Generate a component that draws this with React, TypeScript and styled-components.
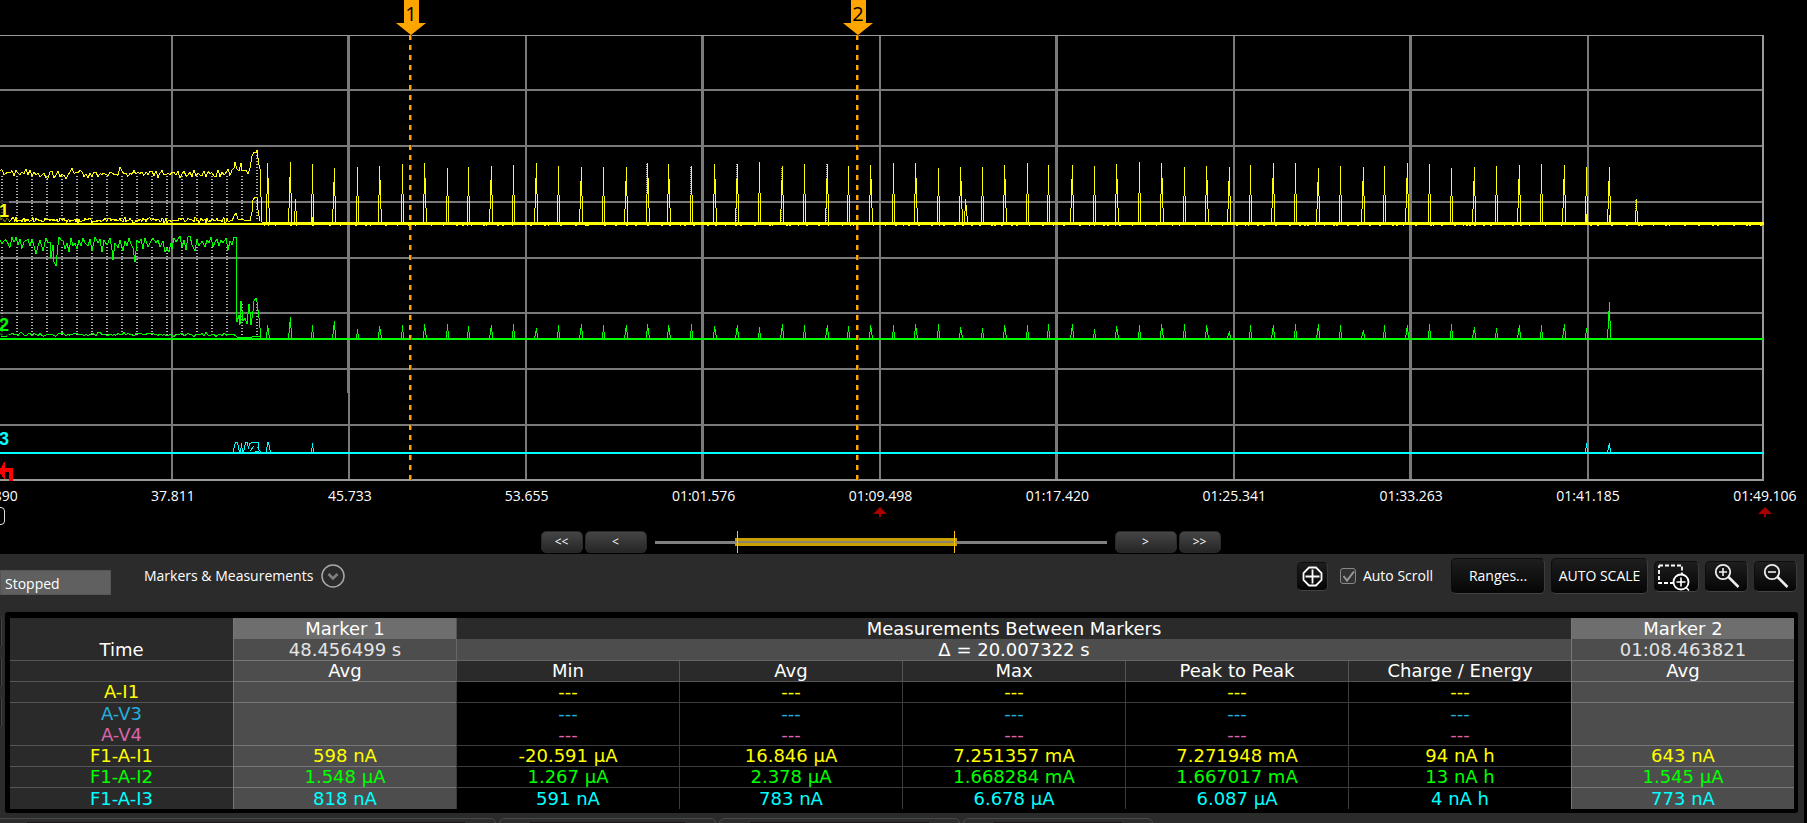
import React from "react";
import styled, { createGlobalStyle, css } from "styled-components";

const GlobalStyle = createGlobalStyle`
  * { box-sizing: border-box; }
  html, body { margin: 0; background: #000; }
  body {
    font-family: "Open Sans", "Noto Sans", sans-serif;
    font-size: 14px;
    line-height: 18px;
    color: #fff;
    overflow-x: hidden;
  }
  button, input { font: inherit; color: inherit; margin: 0; }
`;

/* ---------- waveform data ---------- */

const PLOT_W = 1764;
const PLOT_H = 482;
const YELLOW = "#ffff00";
const GREEN = "#00ff00";
const CYAN = "#00ffff";
const ORANGE = "#ffa500";

const GRID_ROWS = [89, 145, 201, 257, 312, 368, 424];
const GRID_COLS: [number, number][] = [
  [171, 2], [347, 3], [525, 2], [701, 3], [879, 2], [1055, 3], [1233, 2], [1409, 3], [1587, 2],
];

/* x, top of the current 1 pulse, skew, top of the current 2 pulse */
const PULSES: [number, number, number, number][] = [
  [267, 163, 1, 325], [290, 162, -1, 317], [312, 164, 0, 325], [334, 168, -1, 321],
  [357, 167, 0, 329], [379, 166, 1, 326], [402, 164, 0, 325], [424, 163, 1, 324],
  [447, 168, 0, 324], [468, 167, 0, 326], [491, 166, -1, 325], [513, 165, 0, 324],
  [536, 163, -1, 328], [558, 166, 0, 325], [581, 167, -1, 324], [603, 167, 0, 325],
  [626, 167, -1, 325], [647, 163, 1, 324], [668, 164, 1, 325], [691, 166, 0, 324],
  [714, 164, 1, 326], [737, 164, -1, 325], [759, 162, 0, 327], [782, 166, -1, 324],
  [804, 164, 0, 325], [827, 164, -1, 325], [848, 166, 0, 326], [870, 165, 1, 325],
  [893, 163, 0, 325], [915, 163, 1, 324], [938, 168, 0, 324], [960, 167, 1, 327],
  [982, 167, 0, 328], [1004, 165, 1, 325], [1027, 163, 0, 325], [1048, 165, 0, 324],
  [1072, 165, -1, 324], [1094, 166, 0, 329], [1116, 164, 1, 326], [1139, 162, 0, 325],
  [1161, 163, 1, 324], [1184, 167, 0, 324], [1206, 166, 1, 325], [1229, 167, -1, 331],
  [1250, 165, 0, 325], [1273, 163, -1, 325], [1295, 163, 0, 324], [1318, 168, -1, 324],
  [1340, 166, 0, 325], [1363, 167, -1, 330], [1384, 166, 0, 325], [1407, 163, -1, 325],
  [1429, 164, 0, 324], [1451, 168, 0, 324], [1474, 167, -1, 327], [1496, 166, 0, 328],
  [1519, 165, -1, 325], [1541, 164, 0, 325], [1564, 165, -1, 324], [1586, 167, 0, 328],
  [1609, 167, -1, 302],
];

function bar(x: number, from: number, to: number) {
  return `M${x} ${from}h1V${to}h-1z`;
}

function pulse(x: number, top: number, base: number, skew: number) {
  const h = base - top;
  const mid = Math.round(base - h * 0.48);
  if (skew === 0) return bar(x, top, mid) + bar(x - 1, mid, base) + bar(x + 1, mid, base);
  const shoulder = Math.round(top + h * 0.25);
  const foot = Math.round(base - h * 0.24);
  return (
    bar(x, top, mid) + bar(x + skew, shoulder, foot) + bar(x - skew, mid, base) + bar(x + 2 * skew, foot, base)
  );
}

function random(seed: number) {
  let s = seed;
  return () => {
    s = (s * 16807) % 2147483647;
    return s / 2147483647;
  };
}

function noise(seed: number, to: number, mid: number, swing: number, step: number) {
  const next = random(seed);
  const points: string[] = [];
  for (let x = 0; x <= to; x += step) {
    points.push(`${x} ${(mid + (next() + next() - 1) * swing).toFixed(1)}`);
  }
  return points.join("L");
}

function nibs() {
  const next = random(77);
  let d = "";
  for (let x = 264; x < 1760; x += 3 + Math.floor(next() * 14)) {
    d += `M${x} 225h${1 + Math.floor(next() * 3)}v1h-2z`;
  }
  return d;
}

const yellowUpper =
  "M" + noise(11, 230, 173.5, 6, 2) +
  "L232 170L234 168L235 162L237 169L239 171L241 163L242 171L246 170L248 174L250 168L252 156L254 152L256 153L257 150L259 165L260 169L261 197L262 222";
const yellowLower =
  "M" + noise(23, 232, 220, 3, 1) + "L234 216L236 213L238 219L250 221L252 212L253 200L255 197L257 198L258 210L260 221";
const greenUpper =
  "M" + noise(5, 34, 243, 9, 2) + "L36 254L38 246L" +
  "40 240L43 251L46 238L48 243L50 242L51 258L53 245L54 262L56 266L58 245L59 237L61 240L63 241L65 249L67 243L69 252L71 238L73 246L75 243L77 249L79 240L81 246L83 238L85 243L88 246L90 239L92 251L95 237L98 243L100 239L102 252L104 240L107 245L110 238L112 250L113 260L115 243L118 248L120 240L123 251L125 241L127 246L129 238L131 244L133 248L135 262L137 240L139 243L141 239L143 249L145 238L148 247L151 241L153 238L156 243L158 240L160 247L163 241L165 252L167 248L169 252L171 243L172 249L174 238L176 242L178 239L180 236L182 247L184 240L186 250L188 237L190 236L192 245L195 251L197 239L199 246L202 241L205 247L207 240L209 243L211 237L213 247L215 242L217 239L219 246L221 240L223 243L226 238L228 250L230 241L232 245L234 237L236 237V276L237 322L239 315L240 325L241 301L243 321L245 318L247 324L249 304L250 312L251 325L253 311L254 301L256 298L257 302L259 318L261 338";
const greenLower = "M" + noise(41, 234, 334.5, 2.4, 2) + "L237 337H252L256 336L260 337";
const cyanBurst =
  "M233.5 452V449.500L235.500 442.500H237.500L239.500 452M240.500 452L241.500 443.500L242.500 452M243.500 452L245.500 442.500H247.500L248.500 449L249.500 444L251.500 442.500H258.500V449L260.500 452M250.500 451L253.500 446M254.500 451H258.500M256.500 447.500H258.500M266.500 452L267.500 442.500H268.500L270.500 452";

const timesteps = Array.from({ length: 18 }, (_, i) => 2 + i * 15);

/* ---------- chart ---------- */

const Scope = styled.section`
  height: 554px;
  overflow: hidden;
  display: flex;
  flex-direction: column;
`;

const Plot = styled.div`
  position: relative;
  height: ${PLOT_H}px;
  margin-right: 43px;
`;

const Waves = styled.svg`
  display: block;
  width: 100%;
  height: 100%;
`;

const Flag = styled.div<{ $at: number }>`
  position: absolute;
  top: 0;
  left: ${(p) => (p.$at / PLOT_W) * 100}%;
  width: 30px;
  height: 35px;
  margin-left: -15px;
  background: ${ORANGE};
  clip-path: polygon(8px 0, 23px 0, 23px 23px, 30px 23px, 15px 35px, 0 23px, 8px 23px);
  color: #000;
  font-size: 20px;
  line-height: 28px;
  text-align: center;
`;

const ChannelTag = styled.span<{ $top: number; $color: string }>`
  position: absolute;
  top: ${(p) => p.$top}px;
  left: 0;
  width: 9px;
  height: 22px;
  background: rgba(0, 0, 0, 0.6);
  color: ${(p) => p.$color};
  font: bold 18px/22px "Liberation Sans", Arial, sans-serif;
  text-indent: -1px;
`;

const TimeAxis = styled.div`
  display: flex;
  justify-content: space-between;
  height: 44px;
  margin: 5px 42px 0 -4px;
`;

const Tick = styled.div`
  width: 0;
  display: flex;
  flex-direction: column;
  align-items: center;
  gap: 2px;
  white-space: nowrap;
`;

const OffsetBox = styled.span`
  width: 18px;
  height: 18px;
  flex: none;
  border: 1px solid #ddd;
  border-radius: 4px;
`;

const TriggerIcon = styled.svg`
  flex: none;
`;

const Scroller = styled.div`
  display: flex;
  align-items: center;
  justify-content: center;
  gap: 2px;
  height: 22px;
  margin: 0 42px 0 -4px;
`;

const StepButton = styled.button<{ $wide?: boolean }>`
  width: ${(p) => (p.$wide ? 62 : 42)}px;
  height: 22px;
  padding: 0;
  border: 1px solid #2a2a2a;
  border-radius: 5px;
  background: linear-gradient(#454545, #262626);
  font-size: 12px;
  line-height: 20px;
`;

const thumb = css`
  width: 222px;
  height: 22px;
  border: 0;
  border-radius: 0;
  background:
    linear-gradient(#ffc800, #ffc800) 2px 0 / 1px 22px no-repeat,
    linear-gradient(#ffc800, #ffc800) 219px 0 / 1px 22px no-repeat,
    linear-gradient(#8c8468, #8c8468) 0 10px / 222px 2px no-repeat,
    linear-gradient(#c9a000, #c9a000) 0 7px / 222px 8px no-repeat;
`;

const RangeBar = styled.input`
  appearance: none;
  width: 452px;
  height: 22px;
  margin: 0 6px;
  background: linear-gradient(#808080, #808080) 0 10px / 100% 3px no-repeat;
  &::-webkit-slider-thumb {
    appearance: none;
    ${thumb}
  }
  &::-moz-range-thumb {
    ${thumb}
  }
`;

/* ---------- lower panel ---------- */

const Panel = styled.section`
  margin-right: 3px;
  background: #2b2b2b;
  overflow: hidden;
`;

const Toolbar = styled.div`
  display: flex;
  align-items: center;
  height: 58px;
  padding: 0 7px 14px 0;
`;

const Status = styled.output`
  align-self: flex-end;
  width: 111px;
  height: 25px;
  margin-bottom: 3px;
  padding-left: 4px;
  background: #606060;
  border: 1px solid #555;
  line-height: 25px;
`;

const PanelTitle = styled.span`
  margin: 0 8px 0 33px;
  line-height: 20px;
`;

const RoundButton = styled.button`
  display: flex;
  width: 24px;
  height: 24px;
  padding: 0;
  border: 0;
  background: none;
`;

const Spacer = styled.div`
  flex: 1;
`;

const Actions = styled.div`
  display: flex;
  align-items: center;
  gap: 6px;
`;

const DarkButton = styled.button<{ $w: number; $h: number }>`
  display: flex;
  align-items: center;
  justify-content: center;
  width: ${(p) => p.$w}px;
  height: ${(p) => p.$h}px;
  padding: 0;
  border: 1px solid #0c0c0c;
  border-right-color: #3c3c3c;
  border-bottom-color: #444;
  border-radius: 5px;
  background: linear-gradient(#1e1e1e, #050505);
  white-space: nowrap;
`;

const CheckLabel = styled.label`
  display: flex;
  align-items: center;
  gap: 7px;
  margin: 0 12px 0 6px;
`;

const CheckWrap = styled.span`
  position: relative;
  display: flex;
  svg {
    position: absolute;
    left: 0;
    top: 0;
    pointer-events: none;
  }
`;

const Check = styled.input`
  appearance: none;
  width: 16px;
  height: 16px;
  border: 1px solid #888;
  border-radius: 3px;
  background: #333;
`;

const TableArea = styled.div`
  display: flex;
  padding-right: 6px;
`;

const SideEdge = styled.div`
  display: flex;
  flex-direction: column;
  gap: 10px;
  width: 5px;
  padding-top: 5px;
`;

const SideKey = styled.span`
  width: 2px;
  height: 30px;
  background: #1a1a1a;
  border: solid #444;
  border-width: 1px 1px 1px 0;
  border-radius: 0 2px 2px 0;
`;

const Frame = styled.div`
  flex: 1;
  padding: 6px 4px 4px 5px;
  border-radius: 3px;
  background: #000;
`;

const Table = styled.table`
  width: 100%;
  table-layout: fixed;
  border-collapse: separate;
  border-spacing: 0;
  font-family: Verdana, "DejaVu Sans", sans-serif;
  font-size: 18px;
  line-height: 20px;
  text-align: center;
`;

type Tone = "label" | "head" | "marker" | "markerHead" | "delta" | "value";

const toneBack: Record<Tone, string> = {
  label: "#2a2a2a",
  head: "#2a2a2a",
  marker: "#4d4d4d",
  markerHead: "#6e6e6e",
  delta: "#4d4d4d",
  value: "#000",
};

const toneLine: Record<Tone, string> = {
  label: "#555",
  head: "#555",
  marker: "#777",
  markerHead: "#777",
  delta: "#666",
  value: "#3c3c3c",
};

const cellStyle = css<{ $tone: Tone; $line?: boolean; $side?: boolean; $ink?: string }>`
  height: 21px;
  padding: 0;
  font-weight: normal;
  color: ${(p) => p.$ink ?? "#fff"};
  background: ${(p) => toneBack[p.$tone]};
  border-bottom: ${(p) => (p.$line ? `1px solid ${toneLine[p.$tone]}` : "0")};
  border-left: ${(p) => (p.$side ? `1px solid ${toneLine[p.$tone]}` : "0")};
  white-space: nowrap;
`;

const Th = styled.th`
  ${cellStyle}
`;

const Td = styled.td`
  ${cellStyle}
`;

const Row = styled.tr<{ $tall?: boolean }>`
  height: ${(p) => (p.$tall ? 22 : 21)}px;
`;

const BottomTabs = styled.div`
  display: flex;
  gap: 3px;
  height: 5px;
  margin: 5px 0 0 -4px;
  overflow: hidden;
`;

const BottomTab = styled.div<{ $w: number }>`
  flex: none;
  width: ${(p) => p.$w}px;
  height: 12px;
  padding: 3px 30px 0;
  border: 1px solid #484848;
  border-radius: 5px;
  background: #2d2d2d;
`;

const TabInset = styled.div`
  height: 6px;
  background: #1b1618;
`;

const times = [
  "29.890", "37.811", "45.733", "53.655", "01:01.576", "01:09.498",
  "01:17.420", "01:25.341", "01:33.263", "01:41.185", "01:49.106",
];

type Reading = { name: string; ink: string; values: string[] };

const blank = ["", "---", "---", "---", "---", "---", ""];
const readings: Reading[] = [
  { name: "A-I1", ink: YELLOW, values: blank },
  { name: "A-V3", ink: "#24b0dc", values: blank },
  { name: "A-V4", ink: "#dc64a8", values: blank },
  { name: "F1-A-I1", ink: YELLOW, values: ["598 nA", "-20.591 µA", "16.846 µA", "7.251357 mA", "7.271948 mA", "94 nA h", "643 nA"] },
  { name: "F1-A-I2", ink: GREEN, values: ["1.548 µA", "1.267 µA", "2.378 µA", "1.668284 mA", "1.667017 mA", "13 nA h", "1.545 µA"] },
  { name: "F1-A-I3", ink: CYAN, values: ["818 nA", "591 nA", "783 nA", "6.678 µA", "6.087 µA", "4 nA h", "773 nA"] },
];

function Trigger() {
  return (
    <TriggerIcon width="14" height="10" viewBox="0 0 14 10" fill="#a80000">
      <path d="M7 0L14 7H0zM6 7h2v3H6z" />
    </TriggerIcon>
  );
}

function WaveForms() {
  return (
    <Waves viewBox={`0 0 ${PLOT_W} ${PLOT_H}`} preserveAspectRatio="none" shapeRendering="crispEdges">
      <g fill="#7a7a7a">
        {GRID_ROWS.map((y) => <rect key={y} x="0" y={y} width="1762" height="2" />)}
        {GRID_COLS.map(([x, w]) => <rect key={x} x={x} y="35" width={w} height="444" />)}
      </g>
      <rect x="347" y="393" width="1" height="31" fill="#000" />
      <rect x="347" y="426" width="1" height="53" fill="#000" />
      <g fill="#999">
        <rect x="0" y="35" width="1764" height="1" />
        <rect x="0" y="479" width="1764" height="2" />
        <rect x="1762" y="35" width="2" height="446" />
      </g>

      <g stroke="#b0b0b0" strokeWidth="2" strokeDasharray="1 2">
        {timesteps.map((x) => <path key={x} d={`M${x} ${x > 250 ? 152 : 176}V219`} />)}
        {timesteps.map((x) => <path key={x} d={`M${x} ${x > 236 ? 304 : 247}V335`} />)}
      </g>
      <path
        d="M646.5 164V222M690.5 167V222M736.5 164V222M781.5 168V222M826.5 164V222M1635.5 200V222"
        stroke="#b0b0b0"
        strokeDasharray="1 1"
      />

      <g fill={YELLOW}>
        <rect x="0" y="223" width="262" height="2" />
        <rect x="262" y="222" width="1502" height="3" />
        <path d={nibs()} />
        <path d={PULSES.map(([x, top, skew]) => pulse(x, top, 222, skew)).join("")} />
        <path d={pulse(295, 199, 222, 0) + pulse(965, 199, 222, 1) + pulse(1636, 199, 222, 0)} />
        <path d={bar(1586, 214, 222) + bar(1609, 215, 222) + bar(312, 217, 222)} />
      </g>
      <g fill={GREEN}>
        <rect x="0" y="338" width="1764" height="2" />
        <path d={PULSES.map(([x, , skew, top]) => pulse(x, top, 338, skew)).join("")} />
      </g>
      <g fill={CYAN}>
        <rect x="0" y="452" width="1764" height="2" />
        <path d={pulse(312, 443, 452, 0) + pulse(1586, 443, 452, 0) + pulse(1609, 443, 452, -1)} />
      </g>
      <g fill="none" strokeWidth="1">
        <path d={yellowUpper} stroke={YELLOW} />
        <path d={yellowLower} stroke={YELLOW} />
        <path d={greenUpper} stroke={GREEN} />
        <path d={greenLower} stroke={GREEN} />
        <path d={cyanBurst} stroke={CYAN} />
      </g>

      <path d="M0 469L5 461V468H13V481H9V472H5V480L0 473z" fill="#ff0000" />
      <g strokeDasharray="5 5">
        <path d="M410.5 35V480M857.5 35V480" stroke="#7a4f00" strokeWidth="3" />
        <path d="M410 35V480M857 35V480" stroke={ORANGE} strokeWidth="2" />
      </g>
    </Waves>
  );
}

export default function App() {
  return (
    <>
      <GlobalStyle />
      <Scope>
        <Plot>
          <WaveForms />
          <ChannelTag $top={200} $color={YELLOW}>1</ChannelTag>
          <ChannelTag $top={314} $color={GREEN}>2</ChannelTag>
          <ChannelTag $top={428} $color={CYAN}>3</ChannelTag>
          <Flag $at={411}>1</Flag>
          <Flag $at={858}>2</Flag>
        </Plot>
        <TimeAxis>
          {times.map((t, i) => (
            <Tick key={t}>
              <span>{t}</span>
              {i === 0 && <OffsetBox />}
              {(i === 5 || i === 10) && <Trigger />}
            </Tick>
          ))}
        </TimeAxis>
        <Scroller>
          <StepButton>&lt;&lt;</StepButton>
          <StepButton $wide>&lt;</StepButton>
          <RangeBar type="range" min={0} max={230} defaultValue={80} aria-label="Visible time range" />
          <StepButton $wide>&gt;</StepButton>
          <StepButton>&gt;&gt;</StepButton>
        </Scroller>
      </Scope>

      <Panel>
        <Toolbar>
          <Status>Stopped</Status>
          <PanelTitle>Markers &amp; Measurements</PanelTitle>
          <RoundButton aria-label="Choose view">
            <svg width="24" height="24" viewBox="0 0 24 24" fill="none">
              <circle cx="12" cy="12" r="11" stroke="#a8a8a8" strokeWidth="1.500" />
              <path d="M7.500 10L12 14.500L16.500 10" stroke="#808080" strokeWidth="2.500" />
            </svg>
          </RoundButton>
          <Spacer />
          <Actions>
            <DarkButton $w={31} $h={29} aria-label="Centre">
              <svg width="21" height="21" viewBox="0 0 21 21" fill="none" stroke="#fff" strokeWidth="1.800">
                <path d="M7 1.500H14L19.500 7V14L14 19.500H7L1.500 14V7zM10.500 3.500V17.500M3.500 10.500H17.500" />
              </svg>
            </DarkButton>
            <CheckLabel>
              <CheckWrap>
                <Check type="checkbox" defaultChecked />
                <svg width="16" height="16" viewBox="0 0 16 16" fill="none">
                  <path d="M3.500 8L7 12.500L14 3.500" stroke="#999" strokeWidth="2" />
                </svg>
              </CheckWrap>
              Auto Scroll
            </CheckLabel>
            <DarkButton $w={94} $h={36}>Ranges...</DarkButton>
            <DarkButton $w={97} $h={36}>AUTO SCALE</DarkButton>
            <DarkButton $w={45} $h={31} aria-label="Zoom to region">
              <svg width="39" height="29" viewBox="0 0 39 29" fill="none" stroke="#fff">
                <path d="M2 3.500H25V21M17 21H2V3.500" strokeWidth="1.800" strokeDasharray="4 2" />
                <circle cx="24" cy="20" r="7.500" strokeWidth="1.800" fill="#0a0a0a" />
                <path d="M24 15.500V24.500M19.500 20H28.500M29 25.500L32 28.500" strokeWidth="1.600" />
              </svg>
            </DarkButton>
            <DarkButton $w={43} $h={31} aria-label="Zoom in">
              <svg width="26" height="26" viewBox="0 0 26 26" fill="none" stroke="#eee">
                <circle cx="9" cy="9" r="7.200" strokeWidth="1.800" />
                <path d="M9 5V13M5 9H13" strokeWidth="1.600" />
                <path d="M14.500 14L24.500 24" strokeWidth="2.500" />
              </svg>
            </DarkButton>
            <DarkButton $w={43} $h={31} aria-label="Zoom out">
              <svg width="26" height="26" viewBox="0 0 26 26" fill="none" stroke="#eee">
                <circle cx="9" cy="9" r="7.200" strokeWidth="1.800" />
                <path d="M5 9H13" strokeWidth="1.600" />
                <path d="M14.500 14L24.500 24" strokeWidth="2.500" />
              </svg>
            </DarkButton>
          </Actions>
        </Toolbar>

        <TableArea>
          <SideEdge>
            <SideKey />
            <SideKey />
            <SideKey />
          </SideEdge>
          <Frame>
            <Table>
              <thead>
                <Row>
                  <Td $tone="label" />
                  <Th $tone="markerHead" $side>Marker 1</Th>
                  <Th $tone="head" colSpan={5} $side>Measurements Between Markers</Th>
                  <Th $tone="markerHead" $side>Marker 2</Th>
                </Row>
                <Row $tall>
                  <Th $tone="label" $line>Time</Th>
                  <Td $tone="marker" $line $side $ink="#e4e4e4">48.456499 s</Td>
                  <Td $tone="delta" $line $side colSpan={5}>Δ = 20.007322 s</Td>
                  <Td $tone="marker" $line $side $ink="#e4e4e4">01:08.463821</Td>
                </Row>
                <Row>
                  <Td $tone="label" $line />
                  <Th $tone="marker" $line $side>Avg</Th>
                  {["Min", "Avg", "Max", "Peak to Peak", "Charge / Energy"].map((h) => (
                    <Th key={h} $tone="head" $line $side>{h}</Th>
                  ))}
                  <Th $tone="marker" $line $side>Avg</Th>
                </Row>
              </thead>
              <tbody>
                {readings.map((r, i) => {
                  const line = i !== 1 && i !== readings.length - 1;
                  return (
                    <Row key={r.name} $tall={i === 2}>
                      <Th $tone="label" $line={line} $ink={r.ink}>{r.name}</Th>
                      {r.values.map((v, c) => (
                        <Td key={c} $tone={c === 0 || c === 6 ? "marker" : "value"} $line={line} $side $ink={r.ink}>
                          {v}
                        </Td>
                      ))}
                    </Row>
                  );
                })}
              </tbody>
            </Table>
          </Frame>
        </TableArea>

        <BottomTabs>
          {[500, 217, 241, 190].map((w) => (
            <BottomTab key={w} $w={w}>
              <TabInset />
            </BottomTab>
          ))}
        </BottomTabs>
      </Panel>
    </>
  );
}
